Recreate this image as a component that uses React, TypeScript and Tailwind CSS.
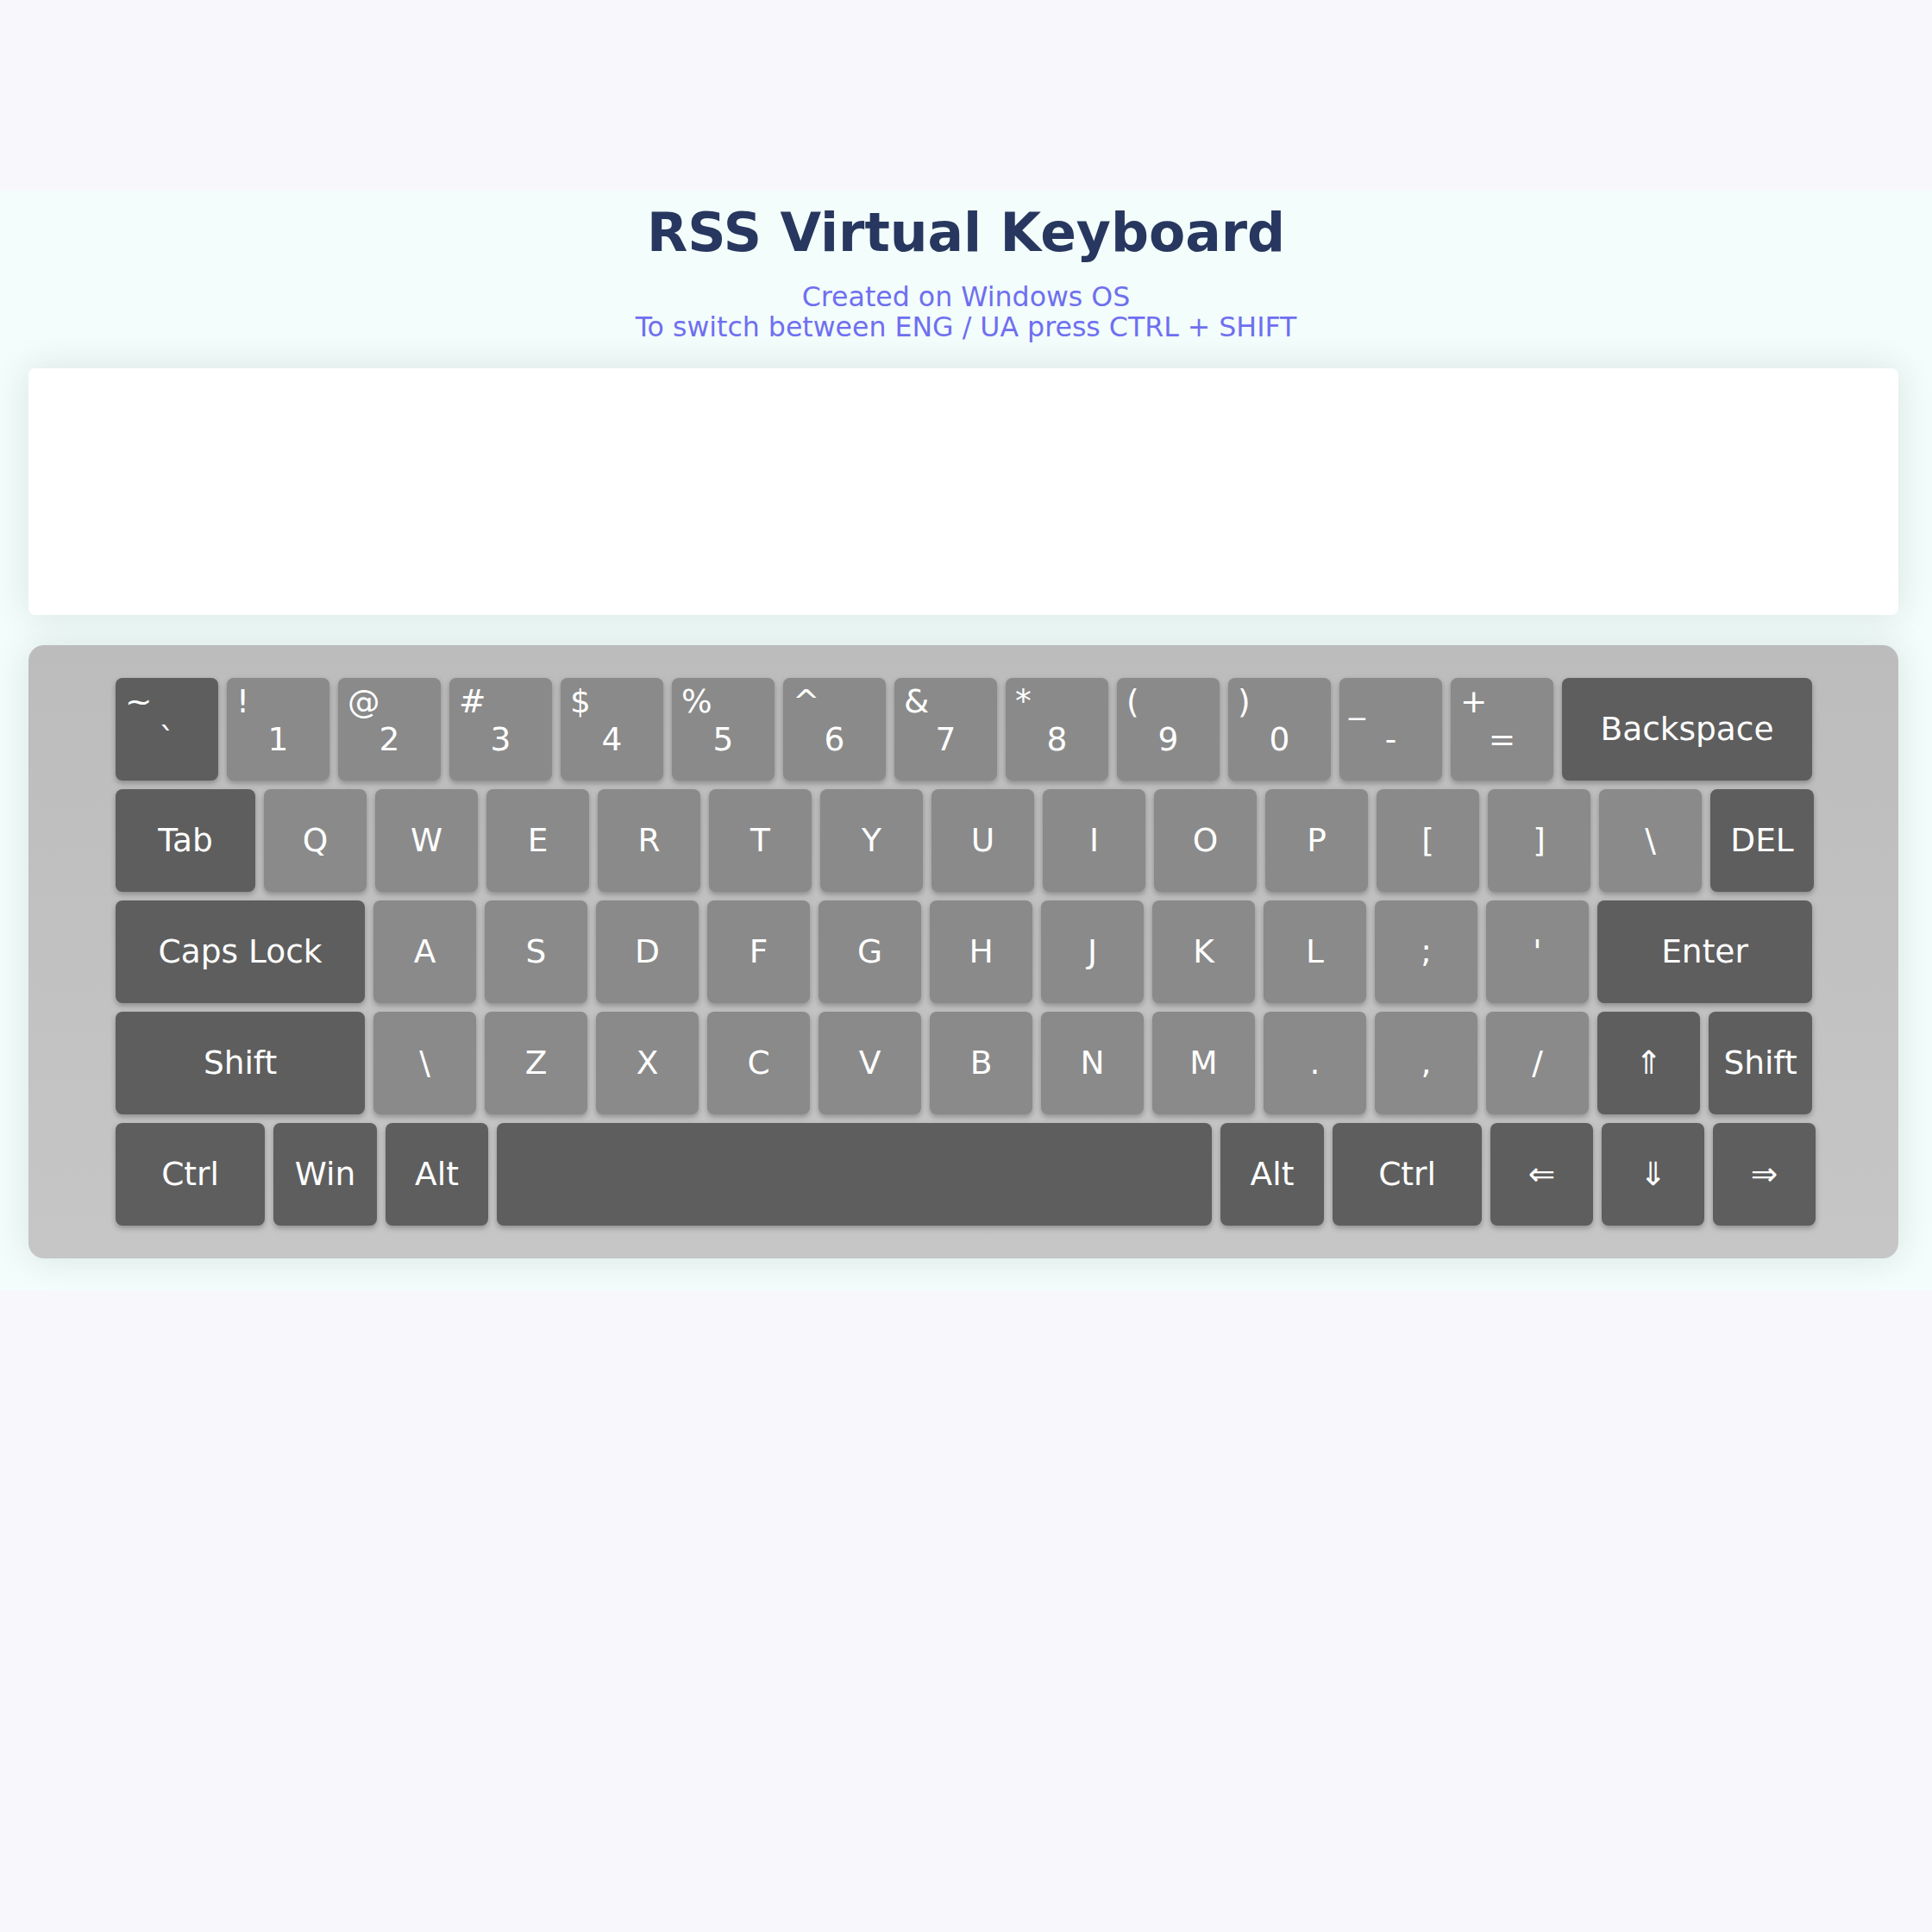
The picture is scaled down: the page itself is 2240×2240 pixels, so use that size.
import React from "react";

type KeyDef = {
  main: string;
  shift?: string;
  w?: string;
  dark?: boolean;
};

const rows: KeyDef[][] = [
  [
    { shift: "~", main: "`", dark: true },
    { shift: "!", main: "1" },
    { shift: "@", main: "2" },
    { shift: "#", main: "3" },
    { shift: "$", main: "4" },
    { shift: "%", main: "5" },
    { shift: "^", main: "6" },
    { shift: "&", main: "7" },
    { shift: "*", main: "8" },
    { shift: "(", main: "9" },
    { shift: ")", main: "0" },
    { shift: "_", main: "-" },
    { shift: "+", main: "=" },
    { main: "Backspace", w: "w-[290px]", dark: true },
  ],
  [
    { main: "Tab", w: "w-[162px]", dark: true },
    ..."QWERTYUIOP[]\\".split("").map((c) => ({ main: c })),
    { main: "DEL", w: "w-[120px]", dark: true },
  ],
  [
    { main: "Caps Lock", w: "w-[289px]", dark: true },
    ..."ASDFGHJKL;'".split("").map((c) => ({ main: c })),
    { main: "Enter", w: "w-[249px]", dark: true },
  ],
  [
    { main: "Shift", w: "w-[289px]", dark: true },
    ..."\\ZXCVBNM.,/".split("").map((c) => ({ main: c })),
    { main: "⇑", dark: true },
    { main: "Shift", w: "w-[120px]", dark: true },
  ],
  [
    { main: "Ctrl", w: "w-[173px]", dark: true },
    { main: "Win", w: "w-[120px]", dark: true },
    { main: "Alt", dark: true },
    { main: "", w: "w-[829px]", dark: true },
    { main: "Alt", w: "w-[120px]", dark: true },
    { main: "Ctrl", w: "w-[173px]", dark: true },
    { main: "⇐", dark: true },
    { main: "⇓", dark: true },
    { main: "⇒", dark: true },
  ],
];

function Key({ k }: { k: KeyDef }) {
  const base = `${k.w ?? "w-[119px]"} h-[119px] shrink-0 rounded-[8px] text-white text-[37.5px] shadow-[0_3px_6px_rgba(0,0,0,0.28)] ${
    k.dark ? "bg-[#5e5e5e]" : "bg-[#8a8a8a]"
  }`;

  if (k.shift) {
    return (
      <div className={`${base} flex flex-col`}>
        <span className="self-start pl-[11px] pt-[9px] leading-[36px]">
          {k.shift}
        </span>
        <span className="self-center mt-[8px] leading-[36px]">{k.main}</span>
      </div>
    );
  }

  return (
    <div className={`${base} flex items-center justify-center leading-none`}>
      {k.main}
    </div>
  );
}

export default function App() {
  return (
    <div className="min-h-[2240px] bg-[#f7f7fc] pt-[221px] font-['DejaVu_Sans',sans-serif]">
      <section className="bg-[#f3fdfb] pt-[19px] pb-[37px]">
        <h1 className="text-center text-[61.5px] leading-[61px] font-bold text-[#27375f]">
          RSS Virtual Keyboard
        </h1>
        <div className="mt-[26px] text-center text-[31.6px] leading-[35px] text-[#6f6ff0]">
          <p>Created on Windows OS</p>
          <p>To switch between ENG / UA press CTRL + SHIFT</p>
        </div>

        <div className="pl-[33px] mt-[30px]">
          <textarea
            className="block w-[2168px] h-[286px] resize-none rounded-[8px] bg-white outline-none shadow-[0_0_40px_rgba(40,70,70,0.13)]"
            readOnly
          />
          <div className="mt-[35px] w-[2168px] rounded-[18px] bg-gradient-to-b from-[#bcbcbc] to-[#c6c6c6] py-[38px] pl-[101px] flex flex-col gap-[10px] shadow-[0_0_40px_rgba(40,70,70,0.13)]">
            {rows.map((row, i) => (
              <div key={i} className="flex gap-[10px]">
                {row.map((k, j) => (
                  <Key key={j} k={k} />
                ))}
              </div>
            ))}
          </div>
        </div>
      </section>
    </div>
  );
}
